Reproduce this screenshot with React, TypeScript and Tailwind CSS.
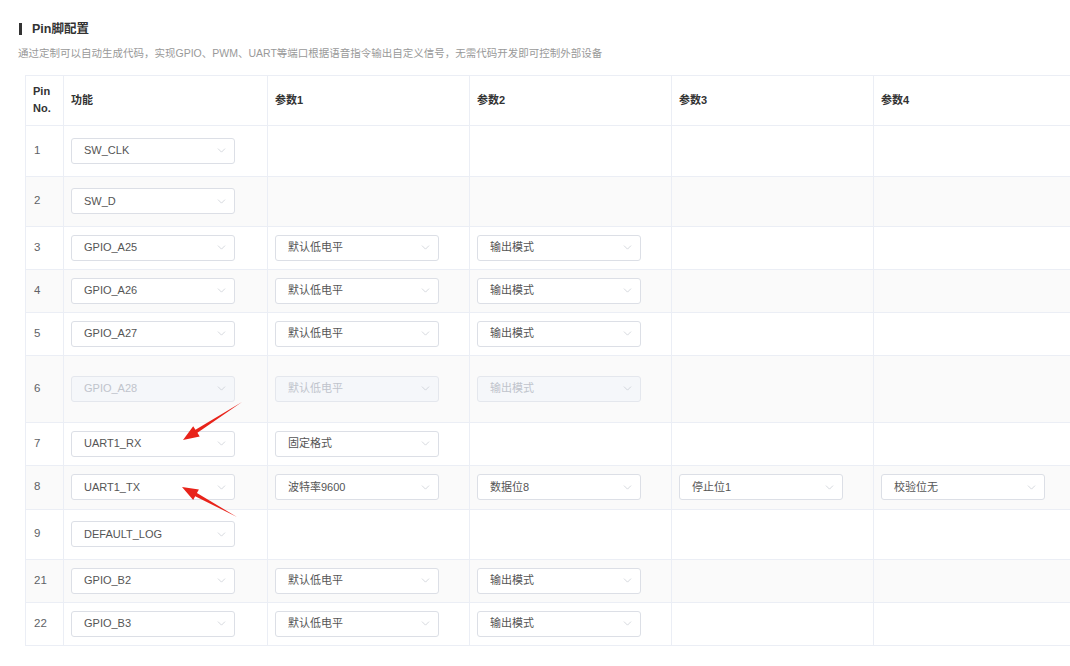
import { ChevronDown } from 'lucide-react';

type Row = {
  pin: string;
  h: string;
  cells: (string | null)[];
  disabled?: boolean;
};

const rows: Row[] = [
  { pin: '1', h: 'h-[51px]', cells: ['SW_CLK', null, null, null, null] },
  { pin: '2', h: 'h-[50px]', cells: ['SW_D', null, null, null, null] },
  { pin: '3', h: 'h-[43px]', cells: ['GPIO_A25', '默认低电平', '输出模式', null, null] },
  { pin: '4', h: 'h-[43px]', cells: ['GPIO_A26', '默认低电平', '输出模式', null, null] },
  { pin: '5', h: 'h-[43px]', cells: ['GPIO_A27', '默认低电平', '输出模式', null, null] },
  { pin: '6', h: 'h-[67px]', cells: ['GPIO_A28', '默认低电平', '输出模式', null, null], disabled: true },
  { pin: '7', h: 'h-[43px]', cells: ['UART1_RX', '固定格式', null, null, null] },
  { pin: '8', h: 'h-[44px]', cells: ['UART1_TX', '波特率9600', '数据位8', '停止位1', '校验位无'] },
  { pin: '9', h: 'h-[50px]', cells: ['DEFAULT_LOG', null, null, null, null] },
  { pin: '21', h: 'h-[43px]', cells: ['GPIO_B2', '默认低电平', '输出模式', null, null] },
  { pin: '22', h: 'h-[43px]', cells: ['GPIO_B3', '默认低电平', '输出模式', null, null] },
];

const widths = ['w-[204px]', 'w-[202px]', 'w-[202px]', 'w-[202px]', 'w-[202px]'];

function Select({ value, disabled }: { value: string; disabled?: boolean }) {
  return (
    <div
      className={
        'flex h-[26px] w-[164px] items-center justify-between rounded-[3px] border pl-[12px] pr-[6px] text-[11px] ' +
        (disabled ? 'border-[#e4e7ed] bg-[#f5f7fa] text-[#c0c4cc]' : 'border-[#dcdfe6] bg-white text-[#555]')
      }
    >
      <span>{value}</span>
      <ChevronDown className="h-[13px] w-[13px] text-[#c0c4cc]" strokeWidth={1.2} />
    </div>
  );
}

function Arrow({ x1, y1, x2, y2 }: { x1: number; y1: number; x2: number; y2: number }) {
  const dx = x2 - x1;
  const dy = y2 - y1;
  const len = Math.hypot(dx, dy);
  const ux = dx / len;
  const uy = dy / len;
  const px = -uy;
  const py = ux;
  const headLen = 16;
  const headW = 6;
  const bx = x2 - ux * headLen;
  const by = y2 - uy * headLen;
  const pts = [
    [x1, y1],
    [bx + px * 1.8, by + py * 1.8],
    [bx + px * headW, by + py * headW],
    [x2, y2],
    [bx - px * headW, by - py * headW],
    [bx - px * 1.8, by - py * 1.8],
  ]
    .map((p) => p.join(','))
    .join(' ');
  return <polygon points={pts} fill="#e8231a" />;
}

export default function App() {
  return (
    <div
      className="relative h-[666px] w-[1070px] overflow-hidden bg-white"
      style={{ fontFamily: '"Liberation Sans", "Noto Sans CJK SC", sans-serif' }}
    >
      <div className="px-[18px] pt-[20px]">
        <div className="flex items-center gap-[10px] pl-[1px]">
          <div className="h-[12px] w-[3px] bg-[#333]" />
          <h1 className="text-[12.5px] font-bold text-[#333]">Pin脚配置</h1>
        </div>
        <p className="mt-[7px] text-[10.5px] text-[#999]">
          通过定制可以自动生成代码，实现GPIO、PWM、UART等端口根据语音指令输出自定义信号，无需代码开发即可控制外部设备
        </p>
      </div>

      <div className="mt-[13px] pl-[25px]">
        <table className="w-[1050px] table-fixed border-collapse text-[12px]">
          <thead>
            <tr className="h-[50px]">
              <th className="w-[38px] border border-[#ebeef5] px-[7px] text-left text-[11px] font-bold leading-[17px] text-[#333]">
                Pin
                <br />
                No.
              </th>
              {['功能', '参数1', '参数2', '参数3', '参数4'].map((t, i) => (
                <th
                  key={t}
                  className={`${widths[i]} border border-[#ebeef5] px-[7px] text-left text-[11px] font-bold text-[#333]`}
                >
                  {t}
                </th>
              ))}
            </tr>
          </thead>
          <tbody>
            {rows.map((r, idx) => (
              <tr key={r.pin} className={`${r.h} ${idx % 2 === 1 ? 'bg-[#fafafa]' : 'bg-white'}`}>
                <td className="border border-[#ebeef5] px-[8px] text-[11.5px] text-[#606266]">{r.pin}</td>
                {r.cells.map((c, i) => (
                  <td key={i} className="border border-[#ebeef5] px-[7px]">
                    {c && <Select value={c} disabled={r.disabled} />}
                  </td>
                ))}
              </tr>
            ))}
          </tbody>
        </table>
      </div>

      <svg className="pointer-events-none absolute left-0 top-0" width="1070" height="666">
        <Arrow x1={242} y1={402} x2={183} y2={440} />
        <Arrow x1={237} y1={517} x2={182} y2={487} />
      </svg>
    </div>
  );
}
